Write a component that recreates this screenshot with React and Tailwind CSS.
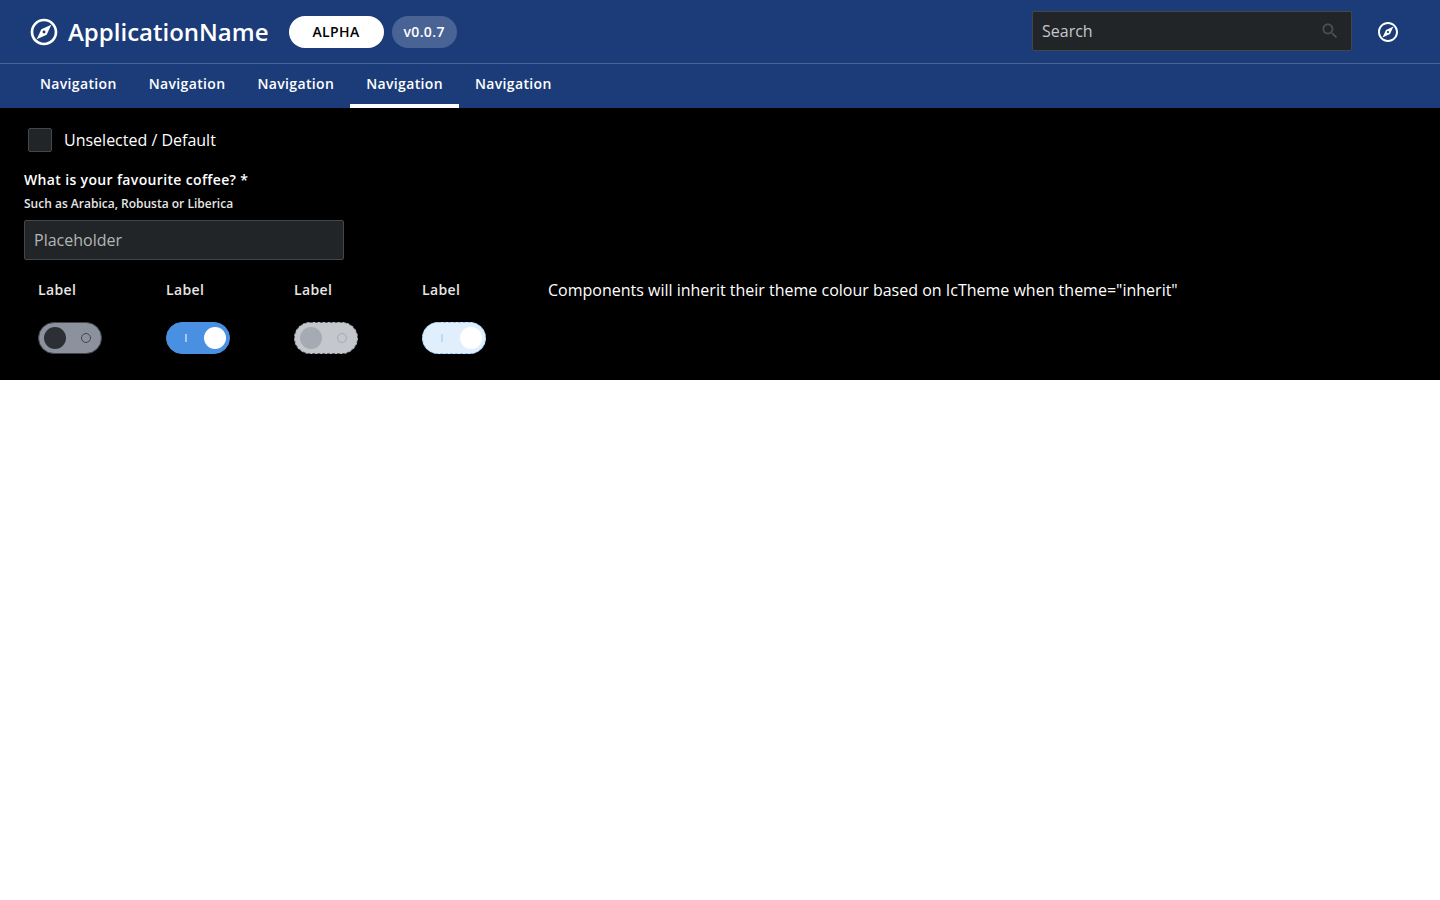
import { useId } from "react";

const EXPLORE_PATH =
  "M12 10.9c-.61 0-1.1.49-1.1 1.1s.49 1.1 1.1 1.1c.61 0 1.1-.49 1.1-1.1s-.49-1.1-1.1-1.1zM12 2C6.48 2 2 6.48 2 12s4.48 10 10 10 10-4.48 10-10S17.52 2 12 2zm0 18c-4.41 0-8-3.59-8-8s3.59-8 8-8 8 3.59 8 8-3.59 8-8 8zm-5.5-2.5l7.51-3.49L17.5 6.5 9.99 9.99 6.5 17.5z";

function ExploreIcon({ className }) {
  return (
    <svg viewBox="0 0 24 24" fill="currentColor" fillRule="evenodd" aria-hidden="true" className={className}>
      <path d={EXPLORE_PATH} />
    </svg>
  );
}

function SearchIcon({ className }) {
  return (
    <svg viewBox="0 0 24 24" fill="currentColor" aria-hidden="true" className={className}>
      <path d="M15.5 14h-.79l-.28-.27C15.41 12.59 16 11.11 16 9.5 16 5.91 13.09 3 9.5 3S3 5.91 3 9.5 5.91 16 9.5 16c1.61 0 3.09-.59 4.23-1.57l.27.28v.79l5 4.99L20.49 19l-4.99-5zm-6 0C7.01 14 5 11.99 5 9.5S7.01 5 9.5 5 14 7.01 14 9.5 11.99 14 9.5 14z" />
    </svg>
  );
}

const NAV_ITEMS = [0, 1, 2, 3, 4];
const SELECTED_NAV = 3;

function TopNavigation() {
  return (
    <header className="bg-[#1b3c79] text-white">
      <div className="flex h-16 items-center border-b border-[#496394] pr-10 pl-7">
        <a href="#home" className="flex items-center gap-2">
          <ExploreIcon className="size-8" />
          <span className="text-2xl font-semibold">ApplicationName</span>
        </a>
        <span className="ml-5 flex h-8 items-center rounded-full bg-white px-6 text-sm font-semibold tracking-wide text-black">
          ALPHA
        </span>
        <span className="ml-2 flex h-8 items-center rounded-full bg-[#496394] px-3 text-sm font-semibold tracking-wide">
          v0.0.7
        </span>
        <form role="search" className="mr-6 mb-px ml-auto flex h-10 w-80 items-center rounded-xs border border-[#43474c] bg-[#222528] pr-[11px]">
          <input
            type="search"
            aria-label="Search"
            placeholder="Search"
            className="min-w-0 flex-1 bg-transparent px-[9px] text-base text-white outline-none placeholder:text-[#c4c7cb]"
          />
          <button type="button" aria-label="Submit search" className="text-[#4c5054]">
            <SearchIcon className="size-5" />
          </button>
        </form>
        <button type="button" aria-label="Explore">
          <ExploreIcon className="size-6" />
        </button>
      </div>
      <nav aria-label="Main" className="px-6">
        <ul className="flex">
          {NAV_ITEMS.map((i) => (
            <li key={i}>
              <a
                href="#navigation"
                aria-current={i === SELECTED_NAV ? "page" : undefined}
                className={
                  "flex h-11 items-center border-b-4 px-4 text-sm font-semibold tracking-wide " +
                  (i === SELECTED_NAV ? "border-white" : "border-transparent")
                }
              >
                Navigation
              </a>
            </li>
          ))}
        </ul>
      </nav>
    </header>
  );
}

const SWITCHES = [
  {
    on: false,
    disabled: false,
    track: "border-[#41464d] bg-[#8c929d]",
    knob: "bg-[#2c2f34]",
    mark: "text-[#41464d]",
  },
  {
    on: true,
    disabled: false,
    track: "border-[#4a90e2] bg-[#4a90e2]",
    knob: "bg-white",
    mark: "text-[#a5c8f1]",
  },
  {
    on: false,
    disabled: true,
    track: "border-dashed border-[#5a5f68] bg-[#c4c7cc]",
    knob: "bg-[#a6abb3]",
    mark: "text-[#a6abb3]",
  },
  {
    on: true,
    disabled: true,
    track: "border-dashed border-[#8fc4f5] bg-[#e1effd]",
    knob: "bg-white",
    mark: "text-[#b5dafa]",
  },
];

function Switch({ on, disabled, track, knob, mark }) {
  const id = useId();
  return (
    <div className="flex w-16 flex-col gap-5">
      <label htmlFor={id} className="text-sm leading-6 font-semibold tracking-wide text-[#e6e6e6]">
        Label
      </label>
      <button
        id={id}
        type="button"
        role="switch"
        aria-checked={on}
        disabled={disabled}
        className={
          "flex h-8 w-16 items-center justify-between rounded-full border pr-[3px] pl-[5px] " +
          (on ? "flex-row-reverse " : "") +
          track
        }
      >
        <span className={"size-[22px] rounded-full " + knob} />
        <svg viewBox="0 0 20 12" aria-hidden="true" className={"h-3 w-5 " + mark}>
          {on ? (
            <rect x="13" y="2" width="2" height="8" fill="currentColor" />
          ) : (
            <circle cx="8" cy="6" r="4.5" fill="none" stroke="currentColor" />
          )}
        </svg>
      </button>
    </div>
  );
}

export default function App() {
  return (
    <div className="min-h-screen bg-white font-['Open_Sans',sans-serif]">
      <TopNavigation />
      <main className="bg-black px-6 pt-4 pb-[26px] text-white">
        <div className="flex h-8 items-center pl-1">
          <input
            id="default-option"
            type="checkbox"
            className="size-6 appearance-none rounded-xs border border-[#43474c] bg-[#222528] checked:bg-[#4a90e2]"
          />
          <label htmlFor="default-option" className="pl-3 text-base">
            Unselected / Default
          </label>
        </div>
        <div className="mt-3 flex flex-col">
          <label htmlFor="coffee" className="text-sm leading-6 font-semibold tracking-wide">
            What is your favourite coffee? *
          </label>
          <p id="coffee-hint" className="text-xs leading-6 font-semibold text-[#e6e6e6]">
            Such as Arabica, Robusta or Liberica
          </p>
          <input
            id="coffee"
            type="text"
            required
            aria-describedby="coffee-hint"
            placeholder="Placeholder"
            className="mt-1 h-10 w-80 rounded-xs border border-[#43474c] bg-[#222528] px-[9px] text-base text-white outline-none placeholder:text-[#b5b5b5]"
          />
        </div>
        <div className="mt-[18px] flex items-start gap-[62px] pl-[14px]">
          <div className="flex gap-16">
            {SWITCHES.map((item, i) => (
              <Switch key={i} {...item} />
            ))}
          </div>
          <p className="text-base">
            Components will inherit their theme colour based on IcTheme when theme="inherit"
          </p>
        </div>
      </main>
    </div>
  );
}
